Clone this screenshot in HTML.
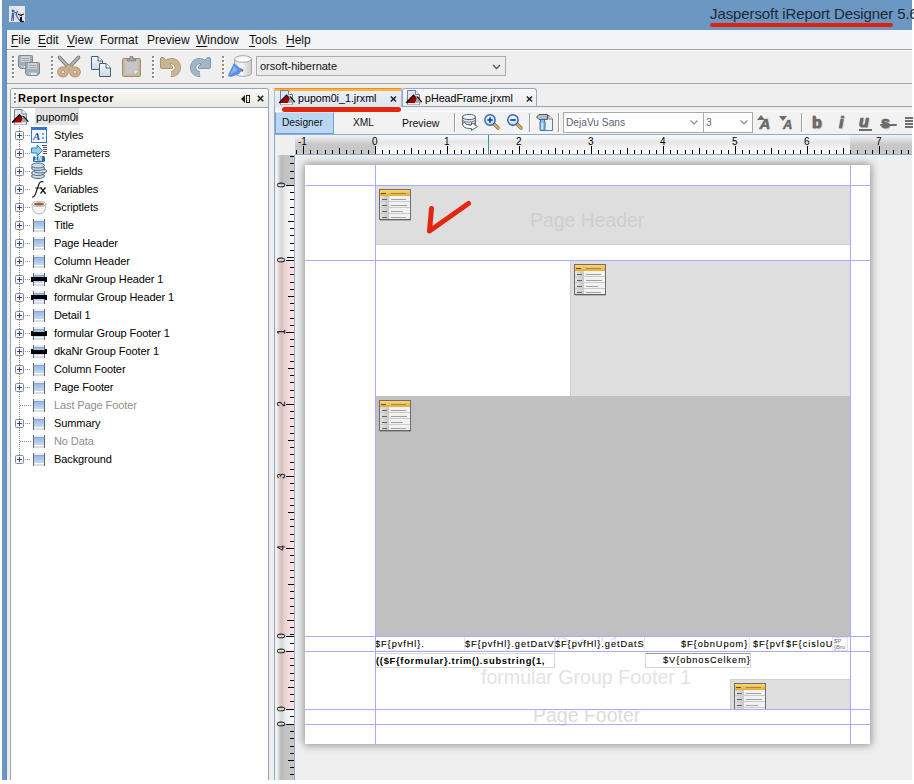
<!DOCTYPE html>
<html><head><meta charset="utf-8">
<style>
*{margin:0;padding:0;box-sizing:border-box}
html,body{width:914px;height:784px;overflow:hidden;background:#fff;font-family:"Liberation Sans",sans-serif;position:relative}
.a{position:absolute}
.t{position:absolute;white-space:nowrap;line-height:1}
svg{overflow:visible}
</style></head><body>
<div class="a" style="left:2px;top:0px;width:910px;height:780px;background:#6a98c3"></div>
<div class="a" style="left:6px;top:30px;width:1px;height:750px;background:#5d88b2"></div>
<svg class="a" style="left:9px;top:6px;" width="16" height="16" viewBox="0 0 16 16"><rect x="0" y="0" width="16" height="16" fill="#e8e8e8"/><path d="M0 0 L16 16 M4 0 L16 12 M0 6 L10 16" stroke="#d0d0d0" stroke-width="1"/><circle cx="4" cy="5" r="1.5" fill="#3a64b0"/><path d="M3 7 L5 7 L5 15 L4 15 L4 11 L3 15 L2 15 Z" fill="#3a64b0"/><path d="M5 7 L8 6 L7 9 L11 15" fill="none" stroke="#3a64b0" stroke-width="1.3"/><path d="M9 8 L13 10 M12 9 L15 8" stroke="#111" stroke-width="1.2"/><path d="M11 11 H13 V15 H15 V16 H11 Z" fill="#111"/></svg>
<div class="t" style="left:710px;top:6px;font-size:15px;color:#1f2833;letter-spacing:-0.1px">Jaspersoft iReport Designer 5.6</div>
<div class="a" style="left:710px;top:23px;width:183px;height:4px;border-radius:2px;background:#e3200b"></div>
<div class="a" style="left:7px;top:30px;width:905px;height:19px;background:#f3f4f6"></div>
<div class="a" style="left:7px;top:49px;width:905px;height:1px;background:#a2a2a2"></div>
<div class="a" style="left:7px;top:50px;width:905px;height:1px;background:#fdfdfd"></div>
<div class="t" style="left:11px;top:34px;font-size:12px;color:#111"><u style="text-decoration-thickness:1px;text-underline-offset:2px">F</u>ile</div>
<div class="t" style="left:38px;top:34px;font-size:12px;color:#111"><u style="text-decoration-thickness:1px;text-underline-offset:2px">E</u>dit</div>
<div class="t" style="left:67px;top:34px;font-size:12px;color:#111"><u style="text-decoration-thickness:1px;text-underline-offset:2px">V</u>iew</div>
<div class="t" style="left:100px;top:34px;font-size:12px;color:#111">Format</div>
<div class="t" style="left:147px;top:34px;font-size:12px;color:#111">Preview</div>
<div class="t" style="left:196px;top:34px;font-size:12px;color:#111"><u style="text-decoration-thickness:1px;text-underline-offset:2px">W</u>indow</div>
<div class="t" style="left:249px;top:34px;font-size:12px;color:#111"><u style="text-decoration-thickness:1px;text-underline-offset:2px">T</u>ools</div>
<div class="t" style="left:286px;top:34px;font-size:12px;color:#111"><u style="text-decoration-thickness:1px;text-underline-offset:2px">H</u>elp</div>
<div class="a" style="left:7px;top:51px;width:905px;height:32px;background:#efefef"></div>
<div class="a" style="left:7px;top:83px;width:905px;height:1px;background:#a9a9a9"></div>
<div class="a" style="left:7px;top:84px;width:905px;height:696px;background:#efefef"></div>
<div class="a" style="left:12px;top:56px;width:2px;height:2px;background:#8c8c8c;box-shadow:1px 1px 0 #fff"></div>
<div class="a" style="left:12px;top:60px;width:2px;height:2px;background:#8c8c8c;box-shadow:1px 1px 0 #fff"></div>
<div class="a" style="left:12px;top:64px;width:2px;height:2px;background:#8c8c8c;box-shadow:1px 1px 0 #fff"></div>
<div class="a" style="left:12px;top:68px;width:2px;height:2px;background:#8c8c8c;box-shadow:1px 1px 0 #fff"></div>
<div class="a" style="left:12px;top:72px;width:2px;height:2px;background:#8c8c8c;box-shadow:1px 1px 0 #fff"></div>
<div class="a" style="left:12px;top:76px;width:2px;height:2px;background:#8c8c8c;box-shadow:1px 1px 0 #fff"></div>
<div class="a" style="left:51px;top:56px;width:2px;height:2px;background:#8c8c8c;box-shadow:1px 1px 0 #fff"></div>
<div class="a" style="left:51px;top:60px;width:2px;height:2px;background:#8c8c8c;box-shadow:1px 1px 0 #fff"></div>
<div class="a" style="left:51px;top:64px;width:2px;height:2px;background:#8c8c8c;box-shadow:1px 1px 0 #fff"></div>
<div class="a" style="left:51px;top:68px;width:2px;height:2px;background:#8c8c8c;box-shadow:1px 1px 0 #fff"></div>
<div class="a" style="left:51px;top:72px;width:2px;height:2px;background:#8c8c8c;box-shadow:1px 1px 0 #fff"></div>
<div class="a" style="left:51px;top:76px;width:2px;height:2px;background:#8c8c8c;box-shadow:1px 1px 0 #fff"></div>
<div class="a" style="left:152px;top:56px;width:2px;height:2px;background:#8c8c8c;box-shadow:1px 1px 0 #fff"></div>
<div class="a" style="left:152px;top:60px;width:2px;height:2px;background:#8c8c8c;box-shadow:1px 1px 0 #fff"></div>
<div class="a" style="left:152px;top:64px;width:2px;height:2px;background:#8c8c8c;box-shadow:1px 1px 0 #fff"></div>
<div class="a" style="left:152px;top:68px;width:2px;height:2px;background:#8c8c8c;box-shadow:1px 1px 0 #fff"></div>
<div class="a" style="left:152px;top:72px;width:2px;height:2px;background:#8c8c8c;box-shadow:1px 1px 0 #fff"></div>
<div class="a" style="left:152px;top:76px;width:2px;height:2px;background:#8c8c8c;box-shadow:1px 1px 0 #fff"></div>
<div class="a" style="left:222px;top:56px;width:2px;height:2px;background:#8c8c8c;box-shadow:1px 1px 0 #fff"></div>
<div class="a" style="left:222px;top:60px;width:2px;height:2px;background:#8c8c8c;box-shadow:1px 1px 0 #fff"></div>
<div class="a" style="left:222px;top:64px;width:2px;height:2px;background:#8c8c8c;box-shadow:1px 1px 0 #fff"></div>
<div class="a" style="left:222px;top:68px;width:2px;height:2px;background:#8c8c8c;box-shadow:1px 1px 0 #fff"></div>
<div class="a" style="left:222px;top:72px;width:2px;height:2px;background:#8c8c8c;box-shadow:1px 1px 0 #fff"></div>
<div class="a" style="left:222px;top:76px;width:2px;height:2px;background:#8c8c8c;box-shadow:1px 1px 0 #fff"></div>
<svg class="a" style="left:18px;top:55px;" width="23" height="23" viewBox="0 0 23 23"><path d="M0.5 1.5 Q0.5 0.5 1.5 0.5 H13.5 Q14.5 0.5 14.5 1.5 V11.5 L12.5 13.5 H2.5 L0.5 11.5 Z" fill="#9daebc" stroke="#7b8996"/><rect x="3" y="1" width="9" height="6" fill="#cfd0d0"/><rect x="4" y="3" width="7" height="1" fill="#a8a8a8"/><rect x="4" y="5" width="7" height="1" fill="#a8a8a8"/><rect x="3" y="10" width="9" height="3" fill="#b8bcc0"/><rect x="6" y="11" width="5" height="2" fill="#e4e4e4"/><path d="M7.5 8.5 Q7.5 7.5 8.5 7.5 H20.5 Q21.5 7.5 21.5 8.5 V18.5 L19.5 20.5 H9.5 L7.5 18.5 Z" fill="#9daebc" stroke="#7b8996"/><rect x="10" y="8" width="9" height="6" fill="#cfd0d0"/><rect x="11" y="10" width="7" height="1" fill="#a8a8a8"/><rect x="11" y="12" width="7" height="1" fill="#a8a8a8"/><rect x="10" y="17" width="9" height="3" fill="#b8bcc0"/><rect x="13" y="18" width="5" height="2" fill="#e4e4e4"/></svg>
<svg class="a" style="left:58px;top:56px;" width="22" height="21" viewBox="0 0 22 21"><path d="M1.5 1.5 L10.5 11" stroke="#6c6c6c" stroke-width="3.6" stroke-linecap="round"/><path d="M20.5 1.5 L11.5 11" stroke="#6c6c6c" stroke-width="3.6" stroke-linecap="round"/><path d="M1.5 1.5 L10.5 11" stroke="#b4b4b4" stroke-width="2.2" stroke-linecap="round"/><path d="M20.5 1.5 L11.5 11" stroke="#b4b4b4" stroke-width="2.2" stroke-linecap="round"/><g fill="none" stroke="#a88a68" stroke-width="4.4"><ellipse cx="5" cy="16" rx="3.6" ry="3.2"/><ellipse cx="17" cy="16" rx="3.6" ry="3.2"/><path d="M7.5 13.5 L11 10.5 L14.5 13.5"/></g><g fill="none" stroke="#cfb08a" stroke-width="3"><ellipse cx="5" cy="16" rx="3.6" ry="3.2"/><ellipse cx="17" cy="16" rx="3.6" ry="3.2"/><path d="M7.5 13.5 L11 10.5 L14.5 13.5"/></g></svg>
<svg class="a" style="left:91px;top:56px;" width="20" height="21" viewBox="0 0 20 21"><defs><linearGradient id="cp" x1="0" y1="0" x2="0" y2="1"><stop offset="0" stop-color="#f4f8fc"/><stop offset="1" stop-color="#c8d8e8"/></linearGradient></defs><path d="M0.5 0.5 H7 L11.5 5 V13.5 H0.5 Z" fill="url(#cp)" stroke="#4e5c6a"/><path d="M7 0.5 V5 H11.5" fill="#fff" stroke="#4e5c6a"/><path d="M8.5 7.5 H15 L19.5 12 V20.5 H8.5 Z" fill="url(#cp)" stroke="#4e5c6a"/><path d="M15 7.5 V12 H19.5" fill="#fff" stroke="#4e5c6a"/></svg>
<svg class="a" style="left:122px;top:56px;" width="19" height="21" viewBox="0 0 19 21"><rect x="0.5" y="2.5" width="18" height="18" rx="1" fill="#c8b89a" stroke="#9c8c70"/><path d="M3 5 H16 V15 L13 18 H3 Z" fill="#c4c6c8"/><path d="M13 18 V15 H16" fill="#e8e8e8"/><path d="M5.5 5 H13.5 V3 H11 V0.5 H8 V3 H5.5 Z" fill="#a6a6a6" stroke="#808080" stroke-width="0.8"/></svg>
<svg class="a" style="left:160px;top:57px;" width="21" height="21" viewBox="0 0 21 21"><g><path d="M6.6 6.1 A6.5 6.5 0 1 1 11 17" fill="none" stroke="#ab9474" stroke-width="6.2"/><path d="M0.5 2 Q0.5 0.5 2 0.5 L3.5 0.5 L12.5 9.5 L12.5 11.5 L2 11.5 Q0.5 11.5 0.5 10 Z" fill="#cbb492" stroke="#ab9474" stroke-width="1"/><path d="M6.6 6.1 A6.5 6.5 0 1 1 11 17" fill="none" stroke="#cbb492" stroke-width="4.6"/><path d="M1.3 2 L1.3 10.7 L11.7 10.7 L11.7 9.8 L3.2 1.3 Z" fill="#cbb492"/></g></svg>
<svg class="a" style="left:190px;top:57px;" width="21" height="21" viewBox="0 0 21 21"><g transform="translate(21,0) scale(-1,1)"><path d="M6.6 6.1 A6.5 6.5 0 1 1 11 17" fill="none" stroke="#8198ac" stroke-width="6.2"/><path d="M0.5 2 Q0.5 0.5 2 0.5 L3.5 0.5 L12.5 9.5 L12.5 11.5 L2 11.5 Q0.5 11.5 0.5 10 Z" fill="#a3b6c6" stroke="#8198ac" stroke-width="1"/><path d="M6.6 6.1 A6.5 6.5 0 1 1 11 17" fill="none" stroke="#a3b6c6" stroke-width="4.6"/><path d="M1.3 2 L1.3 10.7 L11.7 10.7 L11.7 9.8 L3.2 1.3 Z" fill="#a3b6c6"/></g></svg>
<svg class="a" style="left:228px;top:55px;" width="24" height="23" viewBox="0 0 24 23"><defs><linearGradient id="cy" x1="0" y1="0" x2="1" y2="0"><stop offset="0" stop-color="#d8d8d8"/><stop offset="0.4" stop-color="#f8f8f8"/><stop offset="1" stop-color="#c8c8c8"/></linearGradient></defs><path d="M6.5 4 V18 A8.5 3.3 0 0 0 23.5 18 V4" fill="url(#cy)" stroke="#a8a8a8"/><ellipse cx="15" cy="4" rx="8.5" ry="3.3" fill="#fcfcfc" stroke="#a8a8a8"/><path d="M12 14 L15 16" stroke="#707070" stroke-width="2.5"/><path d="M0 21 L1 18 L6 8 L14 15 L11 19 L3 22 Z" fill="#5a8ee0"/><path d="M2 20 L6 11 L10 15 Z" fill="#8ab4ec"/></svg>
<div class="a" style="left:256px;top:56px;width:250px;height:20px;background:#ececec;border:1px solid #acacac"></div>
<div class="t" style="left:260px;top:61px;font-size:11px;color:#111">orsoft-hibernate</div>
<svg class="a" style="left:492px;top:64px;" width="9" height="6" viewBox="0 0 9 6"><path d="M1 1 L4.5 4.5 L8 1" fill="none" stroke="#555" stroke-width="1.3"/></svg>
<!--LEFT-->
<!--EDITOR-->
<div class="a" style="left:10px;top:88px;width:259px;height:692px;background:#fff;border:1px solid #8fa6bd;border-bottom:none;border-radius:3px 3px 0 0"></div>
<div class="a" style="left:11px;top:89px;width:257px;height:18px;background:linear-gradient(#fbfaf6,#e9e8e1);border-radius:2px 2px 0 0"></div>
<div class="a" style="left:11px;top:107px;width:257px;height:1px;background:#8fa6bd"></div>
<div class="a" style="left:14px;top:93px;width:2px;height:2px;background:radial-gradient(circle at 40% 40%,#777 0,#999 60%,transparent 80%);box-shadow:1px 1px 0 #fff"></div>
<div class="a" style="left:14px;top:97px;width:2px;height:2px;background:radial-gradient(circle at 40% 40%,#777 0,#999 60%,transparent 80%);box-shadow:1px 1px 0 #fff"></div>
<div class="a" style="left:14px;top:101px;width:2px;height:2px;background:radial-gradient(circle at 40% 40%,#777 0,#999 60%,transparent 80%);box-shadow:1px 1px 0 #fff"></div>
<div class="t" style="left:18px;top:93px;font-size:11px;font-weight:bold;color:#000;letter-spacing:0.5px">Report Inspector</div>
<svg class="a" style="left:241px;top:95px;" width="9" height="8" viewBox="0 0 9 8"><path d="M4 0 V8 L0 4 Z" fill="#222"/><rect x="5.5" y="0.5" width="3" height="7" fill="none" stroke="#222"/></svg>
<svg class="a" style="left:257px;top:95px;" width="7" height="7" viewBox="0 0 7 7"><path d="M0.8 0.8 L6.2 6.2 M6.2 0.8 L0.8 6.2" stroke="#222" stroke-width="1.6"/></svg>
<svg class="a" style="left:12px;top:109px;" width="17" height="16" viewBox="0 0 17 16"><path d="M2.5 0.5 H10 L14.5 5 V15.5 H2.5 Z" fill="#dfe7f0" stroke="#6f8192"/><path d="M10 0.5 V5 H14.5" fill="#f4f8fc" stroke="#6f8192"/><rect x="3" y="13" width="11" height="2.5" fill="#f6f6f6"/><path d="M0 13.5 L7.5 5.5 L11 9.3 L9 13.5 Z" fill="#9c0000"/><path d="M9 13.5 L11.5 7.5 L16.5 13 Z" fill="#a6a6a6"/><path d="M0 13.5 L7.5 5.5 L9.6 7.9 M10.5 7.7 L11.5 7.3 L16.3 12.7" fill="none" stroke="#000" stroke-width="1.1"/></svg>
<div class="a" style="left:35px;top:108px;width:44px;height:17px;background:#e3e3e3"></div>
<div class="t" style="left:36px;top:112px;font-size:11px;color:#000">pupom0i</div>
<div class="a" style="left:19px;top:126px;width:1px;height:333px;background:repeating-linear-gradient(#8a8a8a 0 1px,transparent 1px 2px)"></div>
<div class="a" style="left:25px;top:135px;width:6px;height:1px;background:repeating-linear-gradient(90deg,#8a8a8a 0 1px,transparent 1px 2px)"></div>
<svg class="a" style="left:15px;top:131px;" width="9" height="9" viewBox="0 0 9 9"><rect x="0.5" y="0.5" width="8" height="8" rx="1" fill="#f6f6f6" stroke="#8a8a8a"/><path d="M2 4.5 H7 M4.5 2 V7" stroke="#27468a" stroke-width="1"/></svg>
<svg class="a" style="left:31px;top:127px;" width="16" height="16" viewBox="0 0 16 16"><rect x="0.5" y="0.5" width="15" height="15" fill="#f2f6fb" stroke="#3a78c8"/><rect x="1" y="1" width="14" height="2" fill="#3a78c8"/><text x="2" y="13" font-family="Liberation Serif" font-style="italic" font-weight="bold" font-size="11" fill="#2a5aa8">A</text><rect x="11" y="6" width="2" height="2" fill="#7aa4d8"/><rect x="11" y="10" width="2" height="2" fill="#7aa4d8"/></svg>
<div class="t" style="left:54px;top:130px;font-size:11px;color:#000;letter-spacing:-0.1px">Styles</div>
<div class="a" style="left:25px;top:153px;width:6px;height:1px;background:repeating-linear-gradient(90deg,#8a8a8a 0 1px,transparent 1px 2px)"></div>
<svg class="a" style="left:15px;top:149px;" width="9" height="9" viewBox="0 0 9 9"><rect x="0.5" y="0.5" width="8" height="8" rx="1" fill="#f6f6f6" stroke="#8a8a8a"/><path d="M2 4.5 H7 M4.5 2 V7" stroke="#27468a" stroke-width="1"/></svg>
<svg class="a" style="left:31px;top:144px;" width="17" height="19" viewBox="0 0 17 19"><path d="M0.5 4 H6 V1 L11.5 6.5 L6 12 V9 H0.5 Z" fill="#8fd0f4" stroke="#2a80b8" stroke-width="1"/><rect x="11" y="1" width="5" height="1" fill="#555"/><rect x="12" y="3" width="4" height="1" fill="#555"/><rect x="12" y="5" width="4" height="1" fill="#555"/><rect x="12" y="7" width="4" height="1" fill="#555"/><rect x="12" y="9" width="4" height="1" fill="#555"/><rect x="2" y="12" width="12" height="6" rx="1.5" fill="#1e6ea8"/><text x="3" y="17.3" font-family="Liberation Mono" font-weight="bold" font-size="6.5" fill="#fff">IN</text></svg>
<div class="t" style="left:54px;top:148px;font-size:11px;color:#000;letter-spacing:-0.1px">Parameters</div>
<div class="a" style="left:25px;top:171px;width:6px;height:1px;background:repeating-linear-gradient(90deg,#8a8a8a 0 1px,transparent 1px 2px)"></div>
<svg class="a" style="left:15px;top:167px;" width="9" height="9" viewBox="0 0 9 9"><rect x="0.5" y="0.5" width="8" height="8" rx="1" fill="#f6f6f6" stroke="#8a8a8a"/><path d="M2 4.5 H7 M4.5 2 V7" stroke="#27468a" stroke-width="1"/></svg>
<svg class="a" style="left:31px;top:163px;" width="17" height="16" viewBox="0 0 17 16"><g fill="#cfdbe6" stroke="#4a6a88" stroke-width="1"><ellipse cx="7" cy="13" rx="6.5" ry="2.5"/><ellipse cx="7" cy="10" rx="6.5" ry="2.5"/><ellipse cx="9.5" cy="8" rx="6.5" ry="2"/><ellipse cx="7" cy="5" rx="6.5" ry="2.5"/><ellipse cx="7" cy="2.5" rx="6.5" ry="2.5"/></g></svg>
<div class="t" style="left:54px;top:166px;font-size:11px;color:#000;letter-spacing:-0.1px">Fields</div>
<div class="a" style="left:25px;top:189px;width:6px;height:1px;background:repeating-linear-gradient(90deg,#8a8a8a 0 1px,transparent 1px 2px)"></div>
<svg class="a" style="left:15px;top:185px;" width="9" height="9" viewBox="0 0 9 9"><rect x="0.5" y="0.5" width="8" height="8" rx="1" fill="#f6f6f6" stroke="#8a8a8a"/><path d="M2 4.5 H7 M4.5 2 V7" stroke="#27468a" stroke-width="1"/></svg>
<svg class="a" style="left:31px;top:181px;" width="17" height="17" viewBox="0 0 17 17"><path d="M1 16 Q3 16.5 4.5 13 L8 3 Q9.5 -0.5 12.5 1" fill="none" stroke="#1a1a1a" stroke-width="1.2"/><path d="M4 7 H9" stroke="#1a1a1a" stroke-width="0.9"/><path d="M9.5 6.5 L14.5 12.5 M14.5 6.5 L9.5 12.5" stroke="#1a1a1a" stroke-width="1.3"/><path d="M9 6.8 Q10 6 10.6 7 M13.5 12 Q14 13 15 12.2" stroke="#1a1a1a" stroke-width="0.8" fill="none"/></svg>
<div class="t" style="left:54px;top:184px;font-size:11px;color:#000;letter-spacing:-0.1px">Variables</div>
<div class="a" style="left:25px;top:207px;width:6px;height:1px;background:repeating-linear-gradient(90deg,#8a8a8a 0 1px,transparent 1px 2px)"></div>
<svg class="a" style="left:15px;top:203px;" width="9" height="9" viewBox="0 0 9 9"><rect x="0.5" y="0.5" width="8" height="8" rx="1" fill="#f6f6f6" stroke="#8a8a8a"/><path d="M2 4.5 H7 M4.5 2 V7" stroke="#27468a" stroke-width="1"/></svg>
<svg class="a" style="left:31px;top:199px;" width="16" height="16" viewBox="0 0 16 16"><path d="M1 5 Q1 15 8 15 Q15 15 15 5 Z" fill="#f4f4f4" stroke="#b8b8b8"/><ellipse cx="8" cy="5" rx="7" ry="2.6" fill="#f8f8f8" stroke="#b8b8b8"/><ellipse cx="8" cy="5" rx="5" ry="1.6" fill="#a05a38"/></svg>
<div class="t" style="left:54px;top:202px;font-size:11px;color:#000;letter-spacing:-0.1px">Scriptlets</div>
<div class="a" style="left:25px;top:225px;width:6px;height:1px;background:repeating-linear-gradient(90deg,#8a8a8a 0 1px,transparent 1px 2px)"></div>
<svg class="a" style="left:15px;top:221px;" width="9" height="9" viewBox="0 0 9 9"><rect x="0.5" y="0.5" width="8" height="8" rx="1" fill="#f6f6f6" stroke="#8a8a8a"/><path d="M2 4.5 H7 M4.5 2 V7" stroke="#27468a" stroke-width="1"/></svg>
<svg class="a" style="left:31px;top:219px;" width="16" height="13" viewBox="0 0 16 13"><defs><linearGradient id="bg" x1="0" y1="0" x2="0" y2="1"><stop offset="0" stop-color="#98bbe4"/><stop offset="1" stop-color="#c6dbf2"/></linearGradient></defs><rect x="2" y="0" width="12" height="13" fill="#ececec"/><rect x="2" y="2" width="12" height="1" fill="#86a6d6"/><rect x="2" y="3" width="12" height="7" fill="url(#bg)"/><rect x="2" y="10" width="12" height="1" fill="#fafafa"/><rect x="2" y="11" width="12" height="2" fill="#dedede"/><path d="M2.5 0 V13 M13.5 0 V13" stroke="#5a6a7c" stroke-width="1"/></svg>
<div class="t" style="left:54px;top:220px;font-size:11px;color:#000;letter-spacing:-0.1px">Title</div>
<div class="a" style="left:25px;top:243px;width:6px;height:1px;background:repeating-linear-gradient(90deg,#8a8a8a 0 1px,transparent 1px 2px)"></div>
<svg class="a" style="left:15px;top:239px;" width="9" height="9" viewBox="0 0 9 9"><rect x="0.5" y="0.5" width="8" height="8" rx="1" fill="#f6f6f6" stroke="#8a8a8a"/><path d="M2 4.5 H7 M4.5 2 V7" stroke="#27468a" stroke-width="1"/></svg>
<svg class="a" style="left:31px;top:237px;" width="16" height="13" viewBox="0 0 16 13"><defs><linearGradient id="bg" x1="0" y1="0" x2="0" y2="1"><stop offset="0" stop-color="#98bbe4"/><stop offset="1" stop-color="#c6dbf2"/></linearGradient></defs><rect x="2" y="0" width="12" height="13" fill="#ececec"/><rect x="2" y="2" width="12" height="1" fill="#86a6d6"/><rect x="2" y="3" width="12" height="7" fill="url(#bg)"/><rect x="2" y="10" width="12" height="1" fill="#fafafa"/><rect x="2" y="11" width="12" height="2" fill="#dedede"/><path d="M2.5 0 V13 M13.5 0 V13" stroke="#5a6a7c" stroke-width="1"/></svg>
<div class="t" style="left:54px;top:238px;font-size:11px;color:#000;letter-spacing:-0.1px">Page Header</div>
<div class="a" style="left:25px;top:261px;width:6px;height:1px;background:repeating-linear-gradient(90deg,#8a8a8a 0 1px,transparent 1px 2px)"></div>
<svg class="a" style="left:15px;top:257px;" width="9" height="9" viewBox="0 0 9 9"><rect x="0.5" y="0.5" width="8" height="8" rx="1" fill="#f6f6f6" stroke="#8a8a8a"/><path d="M2 4.5 H7 M4.5 2 V7" stroke="#27468a" stroke-width="1"/></svg>
<svg class="a" style="left:31px;top:255px;" width="16" height="13" viewBox="0 0 16 13"><defs><linearGradient id="bg" x1="0" y1="0" x2="0" y2="1"><stop offset="0" stop-color="#98bbe4"/><stop offset="1" stop-color="#c6dbf2"/></linearGradient></defs><rect x="2" y="0" width="12" height="13" fill="#ececec"/><rect x="2" y="2" width="12" height="1" fill="#86a6d6"/><rect x="2" y="3" width="12" height="7" fill="url(#bg)"/><rect x="2" y="10" width="12" height="1" fill="#fafafa"/><rect x="2" y="11" width="12" height="2" fill="#dedede"/><path d="M2.5 0 V13 M13.5 0 V13" stroke="#5a6a7c" stroke-width="1"/></svg>
<div class="t" style="left:54px;top:256px;font-size:11px;color:#000;letter-spacing:-0.1px">Column Header</div>
<div class="a" style="left:25px;top:279px;width:6px;height:1px;background:repeating-linear-gradient(90deg,#8a8a8a 0 1px,transparent 1px 2px)"></div>
<svg class="a" style="left:15px;top:275px;" width="9" height="9" viewBox="0 0 9 9"><rect x="0.5" y="0.5" width="8" height="8" rx="1" fill="#f6f6f6" stroke="#8a8a8a"/><path d="M2 4.5 H7 M4.5 2 V7" stroke="#27468a" stroke-width="1"/></svg>
<svg class="a" style="left:31px;top:273px;" width="16" height="13" viewBox="0 0 16 13"><defs><linearGradient id="bg" x1="0" y1="0" x2="0" y2="1"><stop offset="0" stop-color="#98bbe4"/><stop offset="1" stop-color="#c6dbf2"/></linearGradient></defs><rect x="2" y="0" width="12" height="13" fill="#ececec"/><rect x="2" y="2" width="12" height="1" fill="#86a6d6"/><rect x="2" y="3" width="12" height="7" fill="url(#bg)"/><rect x="2" y="10" width="12" height="1" fill="#fafafa"/><rect x="2" y="11" width="12" height="2" fill="#dedede"/><path d="M2.5 0 V13 M13.5 0 V13" stroke="#5a6a7c" stroke-width="1"/><path d="M0 4 H16 V9 H14 V8 H2 V9 H0 Z" fill="#000"/></svg>
<div class="t" style="left:54px;top:274px;font-size:11px;color:#000;letter-spacing:-0.1px">dkaNr Group Header 1</div>
<div class="a" style="left:25px;top:297px;width:6px;height:1px;background:repeating-linear-gradient(90deg,#8a8a8a 0 1px,transparent 1px 2px)"></div>
<svg class="a" style="left:15px;top:293px;" width="9" height="9" viewBox="0 0 9 9"><rect x="0.5" y="0.5" width="8" height="8" rx="1" fill="#f6f6f6" stroke="#8a8a8a"/><path d="M2 4.5 H7 M4.5 2 V7" stroke="#27468a" stroke-width="1"/></svg>
<svg class="a" style="left:31px;top:291px;" width="16" height="13" viewBox="0 0 16 13"><defs><linearGradient id="bg" x1="0" y1="0" x2="0" y2="1"><stop offset="0" stop-color="#98bbe4"/><stop offset="1" stop-color="#c6dbf2"/></linearGradient></defs><rect x="2" y="0" width="12" height="13" fill="#ececec"/><rect x="2" y="2" width="12" height="1" fill="#86a6d6"/><rect x="2" y="3" width="12" height="7" fill="url(#bg)"/><rect x="2" y="10" width="12" height="1" fill="#fafafa"/><rect x="2" y="11" width="12" height="2" fill="#dedede"/><path d="M2.5 0 V13 M13.5 0 V13" stroke="#5a6a7c" stroke-width="1"/><path d="M0 4 H16 V9 H14 V8 H2 V9 H0 Z" fill="#000"/></svg>
<div class="t" style="left:54px;top:292px;font-size:11px;color:#000;letter-spacing:-0.1px">formular Group Header 1</div>
<div class="a" style="left:25px;top:315px;width:6px;height:1px;background:repeating-linear-gradient(90deg,#8a8a8a 0 1px,transparent 1px 2px)"></div>
<svg class="a" style="left:15px;top:311px;" width="9" height="9" viewBox="0 0 9 9"><rect x="0.5" y="0.5" width="8" height="8" rx="1" fill="#f6f6f6" stroke="#8a8a8a"/><path d="M2 4.5 H7 M4.5 2 V7" stroke="#27468a" stroke-width="1"/></svg>
<svg class="a" style="left:31px;top:309px;" width="16" height="13" viewBox="0 0 16 13"><defs><linearGradient id="bg" x1="0" y1="0" x2="0" y2="1"><stop offset="0" stop-color="#98bbe4"/><stop offset="1" stop-color="#c6dbf2"/></linearGradient></defs><rect x="2" y="0" width="12" height="13" fill="#ececec"/><rect x="2" y="2" width="12" height="1" fill="#86a6d6"/><rect x="2" y="3" width="12" height="7" fill="url(#bg)"/><rect x="2" y="10" width="12" height="1" fill="#fafafa"/><rect x="2" y="11" width="12" height="2" fill="#dedede"/><path d="M2.5 0 V13 M13.5 0 V13" stroke="#5a6a7c" stroke-width="1"/></svg>
<div class="t" style="left:54px;top:310px;font-size:11px;color:#000;letter-spacing:-0.1px">Detail 1</div>
<div class="a" style="left:25px;top:333px;width:6px;height:1px;background:repeating-linear-gradient(90deg,#8a8a8a 0 1px,transparent 1px 2px)"></div>
<svg class="a" style="left:15px;top:329px;" width="9" height="9" viewBox="0 0 9 9"><rect x="0.5" y="0.5" width="8" height="8" rx="1" fill="#f6f6f6" stroke="#8a8a8a"/><path d="M2 4.5 H7 M4.5 2 V7" stroke="#27468a" stroke-width="1"/></svg>
<svg class="a" style="left:31px;top:327px;" width="16" height="13" viewBox="0 0 16 13"><defs><linearGradient id="bg" x1="0" y1="0" x2="0" y2="1"><stop offset="0" stop-color="#98bbe4"/><stop offset="1" stop-color="#c6dbf2"/></linearGradient></defs><rect x="2" y="0" width="12" height="13" fill="#ececec"/><rect x="2" y="2" width="12" height="1" fill="#86a6d6"/><rect x="2" y="3" width="12" height="7" fill="url(#bg)"/><rect x="2" y="10" width="12" height="1" fill="#fafafa"/><rect x="2" y="11" width="12" height="2" fill="#dedede"/><path d="M2.5 0 V13 M13.5 0 V13" stroke="#5a6a7c" stroke-width="1"/><path d="M0 5 H16 V9 H14 V9 H2 V9 H0 Z" fill="#000"/><rect x="0" y="4" width="2" height="1" fill="#000"/><rect x="14" y="4" width="2" height="1" fill="#000"/></svg>
<div class="t" style="left:54px;top:328px;font-size:11px;color:#000;letter-spacing:-0.1px">formular Group Footer 1</div>
<div class="a" style="left:25px;top:351px;width:6px;height:1px;background:repeating-linear-gradient(90deg,#8a8a8a 0 1px,transparent 1px 2px)"></div>
<svg class="a" style="left:15px;top:347px;" width="9" height="9" viewBox="0 0 9 9"><rect x="0.5" y="0.5" width="8" height="8" rx="1" fill="#f6f6f6" stroke="#8a8a8a"/><path d="M2 4.5 H7 M4.5 2 V7" stroke="#27468a" stroke-width="1"/></svg>
<svg class="a" style="left:31px;top:345px;" width="16" height="13" viewBox="0 0 16 13"><defs><linearGradient id="bg" x1="0" y1="0" x2="0" y2="1"><stop offset="0" stop-color="#98bbe4"/><stop offset="1" stop-color="#c6dbf2"/></linearGradient></defs><rect x="2" y="0" width="12" height="13" fill="#ececec"/><rect x="2" y="2" width="12" height="1" fill="#86a6d6"/><rect x="2" y="3" width="12" height="7" fill="url(#bg)"/><rect x="2" y="10" width="12" height="1" fill="#fafafa"/><rect x="2" y="11" width="12" height="2" fill="#dedede"/><path d="M2.5 0 V13 M13.5 0 V13" stroke="#5a6a7c" stroke-width="1"/><path d="M0 5 H16 V9 H14 V9 H2 V9 H0 Z" fill="#000"/><rect x="0" y="4" width="2" height="1" fill="#000"/><rect x="14" y="4" width="2" height="1" fill="#000"/></svg>
<div class="t" style="left:54px;top:346px;font-size:11px;color:#000;letter-spacing:-0.1px">dkaNr Group Footer 1</div>
<div class="a" style="left:25px;top:369px;width:6px;height:1px;background:repeating-linear-gradient(90deg,#8a8a8a 0 1px,transparent 1px 2px)"></div>
<svg class="a" style="left:15px;top:365px;" width="9" height="9" viewBox="0 0 9 9"><rect x="0.5" y="0.5" width="8" height="8" rx="1" fill="#f6f6f6" stroke="#8a8a8a"/><path d="M2 4.5 H7 M4.5 2 V7" stroke="#27468a" stroke-width="1"/></svg>
<svg class="a" style="left:31px;top:363px;" width="16" height="13" viewBox="0 0 16 13"><defs><linearGradient id="bg" x1="0" y1="0" x2="0" y2="1"><stop offset="0" stop-color="#98bbe4"/><stop offset="1" stop-color="#c6dbf2"/></linearGradient></defs><rect x="2" y="0" width="12" height="13" fill="#ececec"/><rect x="2" y="2" width="12" height="1" fill="#86a6d6"/><rect x="2" y="3" width="12" height="7" fill="url(#bg)"/><rect x="2" y="10" width="12" height="1" fill="#fafafa"/><rect x="2" y="11" width="12" height="2" fill="#dedede"/><path d="M2.5 0 V13 M13.5 0 V13" stroke="#5a6a7c" stroke-width="1"/></svg>
<div class="t" style="left:54px;top:364px;font-size:11px;color:#000;letter-spacing:-0.1px">Column Footer</div>
<div class="a" style="left:25px;top:387px;width:6px;height:1px;background:repeating-linear-gradient(90deg,#8a8a8a 0 1px,transparent 1px 2px)"></div>
<svg class="a" style="left:15px;top:383px;" width="9" height="9" viewBox="0 0 9 9"><rect x="0.5" y="0.5" width="8" height="8" rx="1" fill="#f6f6f6" stroke="#8a8a8a"/><path d="M2 4.5 H7 M4.5 2 V7" stroke="#27468a" stroke-width="1"/></svg>
<svg class="a" style="left:31px;top:381px;" width="16" height="13" viewBox="0 0 16 13"><defs><linearGradient id="bg" x1="0" y1="0" x2="0" y2="1"><stop offset="0" stop-color="#98bbe4"/><stop offset="1" stop-color="#c6dbf2"/></linearGradient></defs><rect x="2" y="0" width="12" height="13" fill="#ececec"/><rect x="2" y="2" width="12" height="1" fill="#86a6d6"/><rect x="2" y="3" width="12" height="7" fill="url(#bg)"/><rect x="2" y="10" width="12" height="1" fill="#fafafa"/><rect x="2" y="11" width="12" height="2" fill="#dedede"/><path d="M2.5 0 V13 M13.5 0 V13" stroke="#5a6a7c" stroke-width="1"/></svg>
<div class="t" style="left:54px;top:382px;font-size:11px;color:#000;letter-spacing:-0.1px">Page Footer</div>
<div class="a" style="left:20px;top:405px;width:11px;height:1px;background:repeating-linear-gradient(90deg,#8a8a8a 0 1px,transparent 1px 2px)"></div>
<svg class="a" style="left:31px;top:399px;" width="16" height="13" viewBox="0 0 16 13"><defs><linearGradient id="bg" x1="0" y1="0" x2="0" y2="1"><stop offset="0" stop-color="#98bbe4"/><stop offset="1" stop-color="#c6dbf2"/></linearGradient></defs><rect x="2" y="0" width="12" height="13" fill="#ececec"/><rect x="2" y="2" width="12" height="1" fill="#86a6d6"/><rect x="2" y="3" width="12" height="7" fill="url(#bg)"/><rect x="2" y="10" width="12" height="1" fill="#fafafa"/><rect x="2" y="11" width="12" height="2" fill="#dedede"/><path d="M2.5 0 V13 M13.5 0 V13" stroke="#5a6a7c" stroke-width="1"/></svg>
<div class="t" style="left:54px;top:400px;font-size:11px;color:#8e8e8e;letter-spacing:-0.1px">Last Page Footer</div>
<div class="a" style="left:25px;top:423px;width:6px;height:1px;background:repeating-linear-gradient(90deg,#8a8a8a 0 1px,transparent 1px 2px)"></div>
<svg class="a" style="left:15px;top:419px;" width="9" height="9" viewBox="0 0 9 9"><rect x="0.5" y="0.5" width="8" height="8" rx="1" fill="#f6f6f6" stroke="#8a8a8a"/><path d="M2 4.5 H7 M4.5 2 V7" stroke="#27468a" stroke-width="1"/></svg>
<svg class="a" style="left:31px;top:417px;" width="16" height="13" viewBox="0 0 16 13"><defs><linearGradient id="bg" x1="0" y1="0" x2="0" y2="1"><stop offset="0" stop-color="#98bbe4"/><stop offset="1" stop-color="#c6dbf2"/></linearGradient></defs><rect x="2" y="0" width="12" height="13" fill="#ececec"/><rect x="2" y="2" width="12" height="1" fill="#86a6d6"/><rect x="2" y="3" width="12" height="7" fill="url(#bg)"/><rect x="2" y="10" width="12" height="1" fill="#fafafa"/><rect x="2" y="11" width="12" height="2" fill="#dedede"/><path d="M2.5 0 V13 M13.5 0 V13" stroke="#5a6a7c" stroke-width="1"/></svg>
<div class="t" style="left:54px;top:418px;font-size:11px;color:#000;letter-spacing:-0.1px">Summary</div>
<div class="a" style="left:20px;top:441px;width:11px;height:1px;background:repeating-linear-gradient(90deg,#8a8a8a 0 1px,transparent 1px 2px)"></div>
<svg class="a" style="left:31px;top:435px;" width="16" height="13" viewBox="0 0 16 13"><defs><linearGradient id="bg" x1="0" y1="0" x2="0" y2="1"><stop offset="0" stop-color="#98bbe4"/><stop offset="1" stop-color="#c6dbf2"/></linearGradient></defs><rect x="2" y="0" width="12" height="13" fill="#ececec"/><rect x="2" y="2" width="12" height="1" fill="#86a6d6"/><rect x="2" y="3" width="12" height="7" fill="url(#bg)"/><rect x="2" y="10" width="12" height="1" fill="#fafafa"/><rect x="2" y="11" width="12" height="2" fill="#dedede"/><path d="M2.5 0 V13 M13.5 0 V13" stroke="#5a6a7c" stroke-width="1"/></svg>
<div class="t" style="left:54px;top:436px;font-size:11px;color:#8e8e8e;letter-spacing:-0.1px">No Data</div>
<div class="a" style="left:25px;top:459px;width:6px;height:1px;background:repeating-linear-gradient(90deg,#8a8a8a 0 1px,transparent 1px 2px)"></div>
<svg class="a" style="left:15px;top:455px;" width="9" height="9" viewBox="0 0 9 9"><rect x="0.5" y="0.5" width="8" height="8" rx="1" fill="#f6f6f6" stroke="#8a8a8a"/><path d="M2 4.5 H7 M4.5 2 V7" stroke="#27468a" stroke-width="1"/></svg>
<svg class="a" style="left:31px;top:453px;" width="16" height="13" viewBox="0 0 16 13"><defs><linearGradient id="bg" x1="0" y1="0" x2="0" y2="1"><stop offset="0" stop-color="#98bbe4"/><stop offset="1" stop-color="#c6dbf2"/></linearGradient></defs><rect x="2" y="0" width="12" height="13" fill="#ececec"/><rect x="2" y="2" width="12" height="1" fill="#86a6d6"/><rect x="2" y="3" width="12" height="7" fill="url(#bg)"/><rect x="2" y="10" width="12" height="1" fill="#fafafa"/><rect x="2" y="11" width="12" height="2" fill="#dedede"/><path d="M2.5 0 V13 M13.5 0 V13" stroke="#5a6a7c" stroke-width="1"/></svg>
<div class="t" style="left:54px;top:454px;font-size:11px;color:#000;letter-spacing:-0.1px">Background</div>
<div class="a" style="left:274px;top:88px;width:128px;height:19px;background:linear-gradient(#edf1fa,#dde4f1);border-left:1px solid #a9bcd2;border-right:1px solid #a9bcd2;border-radius:3px 3px 0 0"></div>
<div class="a" style="left:274px;top:88px;width:128px;height:1px;background:#e8902a;border-radius:3px 3px 0 0"></div>
<div class="a" style="left:275px;top:89px;width:126px;height:2px;background:#f9b73c"></div>
<svg class="a" style="left:279px;top:90px;" width="16" height="16" viewBox="0 0 16 16"><path d="M1.5 0.5 H9.5 L13.5 4.5 V14.5 H1.5 Z" fill="#dde6f0" stroke="#6f8192"/><path d="M9.5 0.5 V4.5 H13.5" fill="#f4f8fc" stroke="#6f8192"/><rect x="2" y="12" width="11" height="2.5" fill="#f6f6f6"/><path d="M0 13 L7.5 5 L11 8.8 L9 13 Z" fill="#9c0000"/><path d="M9 13 L11.5 7 L16 12.5 Z" fill="#a6a6a6"/><path d="M0 13 L7.5 5 L9.6 7.4 M10.5 7.2 L11.5 6.8 L15.8 12.2" fill="none" stroke="#000" stroke-width="1.1"/></svg>
<div class="t" style="left:298px;top:93px;font-size:10.7px;color:#000">pupom0i_1.jrxml</div>
<svg class="a" style="left:390px;top:96px;" width="7" height="6" viewBox="0 0 7 6"><path d="M0.8 0.5 L6 5.5 M6 0.5 L0.8 5.5" stroke="#222" stroke-width="1.5"/></svg>
<div class="a" style="left:402px;top:88px;width:135px;height:19px;background:linear-gradient(#f9f9f9,#ececec);border:1px solid #93aac0;border-bottom:none;border-radius:3px 3px 0 0"></div>
<svg class="a" style="left:406px;top:90px;" width="16" height="16" viewBox="0 0 16 16"><path d="M1.5 0.5 H9.5 L13.5 4.5 V14.5 H1.5 Z" fill="#dde6f0" stroke="#6f8192"/><path d="M9.5 0.5 V4.5 H13.5" fill="#f4f8fc" stroke="#6f8192"/><rect x="2" y="12" width="11" height="2.5" fill="#f6f6f6"/><path d="M0 13 L7.5 5 L11 8.8 L9 13 Z" fill="#9c0000"/><path d="M9 13 L11.5 7 L16 12.5 Z" fill="#a6a6a6"/><path d="M0 13 L7.5 5 L9.6 7.4 M10.5 7.2 L11.5 6.8 L15.8 12.2" fill="none" stroke="#000" stroke-width="1.1"/></svg>
<div class="t" style="left:425px;top:93px;font-size:10.7px;color:#000">pHeadFrame.jrxml</div>
<svg class="a" style="left:526px;top:96px;" width="7" height="6" viewBox="0 0 7 6"><path d="M0.8 0.5 L6 5.5 M6 0.5 L0.8 5.5" stroke="#222" stroke-width="1.5"/></svg>
<div class="a" style="left:275px;top:106px;width:637px;height:674px;background:#efefef"></div>
<div class="a" style="left:401px;top:106px;width:511px;height:1px;background:#8ea9c5"></div>
<div class="a" style="left:275px;top:106px;width:126px;height:1px;background:#e2e8f2"></div>
<div class="a" style="left:275px;top:107px;width:637px;height:1px;background:#f3efe0"></div>
<div class="a" style="left:275px;top:108px;width:637px;height:26px;background:#f2f2f2"></div>
<div class="a" style="left:275px;top:111px;width:637px;height:1px;background:#fdfdfd"></div>
<div class="a" style="left:275px;top:134px;width:637px;height:1px;background:#8eaacc"></div>
<div class="a" style="left:274px;top:106px;width:1px;height:674px;background:#8ea9c5"></div>
<div class="a" style="left:275px;top:112px;width:59px;height:22px;background:#b9d7f3;border:1px solid #6ea2da;border-top:1px solid #cfe4f8"></div>
<div class="t" style="left:282px;top:118px;font-size:10.2px;color:#101010">Designer</div>
<div class="t" style="left:353px;top:118px;font-size:10.2px;color:#101010">XML</div>
<div class="t" style="left:402px;top:118px;font-size:10.5px;color:#101010">Preview</div>
<div class="a" style="left:454px;top:113px;width:1px;height:19px;background:#9c9c9c;box-shadow:1px 0 0 #fff"></div>
<div class="a" style="left:529px;top:113px;width:1px;height:19px;background:#9c9c9c;box-shadow:1px 0 0 #fff"></div>
<div class="a" style="left:558px;top:113px;width:1px;height:19px;background:#9c9c9c;box-shadow:1px 0 0 #fff"></div>
<div class="a" style="left:801px;top:113px;width:1px;height:19px;background:#9c9c9c;box-shadow:1px 0 0 #fff"></div>
<svg class="a" style="left:461px;top:113px;" width="17" height="18" viewBox="0 0 17 18"><path d="M1.5 4 V11 A6.5 2.6 0 0 0 14.5 11 V4" fill="#dfe6ec" stroke="#56646e" stroke-width="1"/><path d="M1.5 6.5 A6.5 2.6 0 0 0 14.5 6.5 M1.5 9 A6.5 2.6 0 0 0 14.5 9" fill="none" stroke="#6e7c86" stroke-width="0.9"/><ellipse cx="8" cy="4" rx="6.5" ry="2.6" fill="#f2f5f8" stroke="#56646e" stroke-width="1"/><path d="M1.5 10 Q1.5 15.5 8.5 15.5 H10.5 V17.5 L16.5 13.5 L10.5 9.5 V12 H8.5 Q4.5 12 4 9.5 Z" fill="#f8fafc" stroke="#56646e" stroke-width="1"/></svg>
<svg class="a" style="left:484px;top:114px;" width="16" height="16" viewBox="0 0 16 16"><defs><radialGradient id="lens" cx="0.4" cy="0.35" r="0.7"><stop offset="0" stop-color="#ffffff"/><stop offset="1" stop-color="#b8d4f4"/></radialGradient></defs><path d="M9.5 9.5 L14 14" stroke="#8a6a30" stroke-width="3.4" stroke-linecap="round"/><path d="M9.5 9.5 L14 14" stroke="#d8b060" stroke-width="2" stroke-linecap="round"/><circle cx="6" cy="6" r="5.2" fill="url(#lens)" stroke="#2f62b8" stroke-width="1.4"/><path d="M3.3 6 H8.7" stroke="#1e4a98" stroke-width="1.8"/><path d="M6 3.3 V8.7" stroke="#1e4a98" stroke-width="1.8"/></svg>
<svg class="a" style="left:507px;top:114px;" width="16" height="16" viewBox="0 0 16 16"><defs><radialGradient id="lens" cx="0.4" cy="0.35" r="0.7"><stop offset="0" stop-color="#ffffff"/><stop offset="1" stop-color="#b8d4f4"/></radialGradient></defs><path d="M9.5 9.5 L14 14" stroke="#8a6a30" stroke-width="3.4" stroke-linecap="round"/><path d="M9.5 9.5 L14 14" stroke="#d8b060" stroke-width="2" stroke-linecap="round"/><circle cx="6" cy="6" r="5.2" fill="url(#lens)" stroke="#2f62b8" stroke-width="1.4"/><path d="M3.3 6 H8.7" stroke="#1e4a98" stroke-width="1.8"/></svg>
<svg class="a" style="left:536px;top:113px;" width="17" height="18" viewBox="0 0 17 18"><path d="M6.5 2.5 H13 L16.5 6 V17.5 H6.5 Z" fill="#eef2f6" stroke="#6a7a88"/><path d="M13 2.5 V6 H16.5" fill="#fff" stroke="#6a7a88"/><path d="M0.5 4 L3 1.5 H11.5 V6.5 H3 Z" fill="#b4bcc4" stroke="#505a64"/><path d="M4.5 6.5 H8.5 V8 L9 9 V16.5 Q9 17.5 8 17.5 H5 Q4 17.5 4 16.5 V9 L4.5 8 Z" fill="#8cc0ec" stroke="#3a6a98"/><rect x="5.5" y="10" width="1.2" height="6" fill="#e8f4ff"/></svg>
<div class="a" style="left:282px;top:107px;width:119px;height:5px;background:#e3260b;border-radius:2.5px"></div>
<div class="a" style="left:563px;top:112px;width:141px;height:21px;background:#fff;border:1px solid #aaa"></div>
<div class="t" style="left:566px;top:118px;font-size:10.2px;color:#5a6078">DejaVu Sans</div>
<svg class="a" style="left:690px;top:120px;" width="8" height="5" viewBox="0 0 8 5"><path d="M0.5 0.5 L4 4 L7.5 0.5" fill="none" stroke="#8a8a8a" stroke-width="1.2"/></svg>
<div class="a" style="left:703px;top:112px;width:50px;height:21px;background:#fff;border:1px solid #aaa"></div>
<div class="t" style="left:706px;top:118px;font-size:10.2px;color:#5a6078">3</div>
<svg class="a" style="left:740px;top:120px;" width="8" height="5" viewBox="0 0 8 5"><path d="M0.5 0.5 L4 4 L7.5 0.5" fill="none" stroke="#8a8a8a" stroke-width="1.2"/></svg>
<svg class="a" style="left:757px;top:114px;" width="16" height="16" viewBox="0 0 16 16"><text x="2.5" y="15" font-family="Liberation Sans" font-weight="bold" font-style="italic" font-size="15" fill="#6a6a6a" stroke="#6a6a6a" stroke-width="0.6">A</text><path d="M0 6 L4 1 L8 6 Z" fill="#6a6a6a"/></svg>
<svg class="a" style="left:779px;top:115px;" width="16" height="15" viewBox="0 0 16 15"><text x="4" y="14" font-family="Liberation Sans" font-weight="bold" font-style="italic" font-size="13" fill="#6a6a6a" stroke="#6a6a6a" stroke-width="0.5">A</text><path d="M0 1 H8 L4 6 Z" fill="#6a6a6a"/></svg>
<div class="t" style="left:812px;top:115px;font-size:16px;font-weight:bold;color:#6c6c6c;text-shadow:0 0 1px rgba(80,80,80,0.9),1px 1px 1px rgba(0,0,0,0.25);-webkit-text-stroke:0.6px #6c6c6c">b</div>
<div class="t" style="left:839px;top:115px;font-size:16px;font-weight:bold;font-style:italic;color:#6c6c6c;text-shadow:0 0 1px rgba(80,80,80,0.9),1px 1px 1px rgba(0,0,0,0.25);-webkit-text-stroke:0.6px #6c6c6c">i</div>
<div class="t" style="left:859px;top:114px;font-size:16px;font-weight:bold;font-style:italic;color:#6c6c6c;text-shadow:0 0 1px rgba(80,80,80,0.9),1px 1px 1px rgba(0,0,0,0.25);-webkit-text-stroke:0.6px #6c6c6c">u</div>
<div class="a" style="left:859px;top:129px;width:13px;height:1.5px;background:#6c6c6c"></div>
<div class="t" style="left:881px;top:115px;font-size:16px;font-weight:bold;color:#6c6c6c;text-shadow:0 0 1px rgba(80,80,80,0.9),1px 1px 1px rgba(0,0,0,0.25);-webkit-text-stroke:0.6px #6c6c6c">s</div>
<div class="a" style="left:880px;top:124px;width:17px;height:2px;background:#6c6c6c;border-radius:1px"></div>
<div class="a" style="left:905px;top:117px;width:8px;height:2px;background:#707070"></div>
<div class="a" style="left:905px;top:120px;width:8px;height:2px;background:#707070"></div>
<div class="a" style="left:905px;top:123px;width:8px;height:2px;background:#707070"></div>
<div class="a" style="left:905px;top:126px;width:8px;height:2px;background:#707070"></div>
<div class="a" style="left:295px;top:135px;width:617px;height:19px;background:linear-gradient(#f8f8f8,#f4f4f4 15%,#e6e6e6 38%,#f2f2f2 65%,#fcfcfc)"></div>
<div class="a" style="left:295px;top:135px;width:80px;height:19px;background:linear-gradient(#f2f2f2,#c6c6c6 55%,#c8c8c8)"></div>
<div class="a" style="left:850px;top:135px;width:62px;height:19px;background:linear-gradient(#f2f2f2,#c6c6c6 55%,#c8c8c8)"></div>
<div class="a" style="left:295px;top:154px;width:617px;height:1px;background:#8eaacc"></div>
<div class="a" style="left:296px;top:150px;width:1px;height:4px;background:#000"></div>
<div class="a" style="left:303px;top:146px;width:1px;height:8px;background:#000"></div>
<div class="t" style="left:298px;top:137px;font-size:10px;color:#000;font-family:Liberation Sans">-1</div>
<div class="a" style="left:310px;top:150px;width:1px;height:4px;background:#000"></div>
<div class="a" style="left:317px;top:150px;width:1px;height:4px;background:#000"></div>
<div class="a" style="left:325px;top:150px;width:1px;height:4px;background:#000"></div>
<div class="a" style="left:332px;top:150px;width:1px;height:4px;background:#000"></div>
<div class="a" style="left:339px;top:148px;width:1px;height:6px;background:#000"></div>
<div class="a" style="left:346px;top:150px;width:1px;height:4px;background:#000"></div>
<div class="a" style="left:353px;top:150px;width:1px;height:4px;background:#000"></div>
<div class="a" style="left:361px;top:150px;width:1px;height:4px;background:#000"></div>
<div class="a" style="left:368px;top:150px;width:1px;height:4px;background:#000"></div>
<div class="a" style="left:375px;top:146px;width:1px;height:8px;background:#000"></div>
<div class="t" style="left:372px;top:137px;font-size:10px;color:#000;font-family:Liberation Sans">0</div>
<div class="a" style="left:382px;top:150px;width:1px;height:4px;background:#000"></div>
<div class="a" style="left:389px;top:150px;width:1px;height:4px;background:#000"></div>
<div class="a" style="left:397px;top:150px;width:1px;height:4px;background:#000"></div>
<div class="a" style="left:404px;top:150px;width:1px;height:4px;background:#000"></div>
<div class="a" style="left:411px;top:148px;width:1px;height:6px;background:#000"></div>
<div class="a" style="left:418px;top:150px;width:1px;height:4px;background:#000"></div>
<div class="a" style="left:425px;top:150px;width:1px;height:4px;background:#000"></div>
<div class="a" style="left:433px;top:150px;width:1px;height:4px;background:#000"></div>
<div class="a" style="left:440px;top:150px;width:1px;height:4px;background:#000"></div>
<div class="a" style="left:447px;top:146px;width:1px;height:8px;background:#000"></div>
<div class="t" style="left:444px;top:137px;font-size:10px;color:#000;font-family:Liberation Sans">1</div>
<div class="a" style="left:454px;top:150px;width:1px;height:4px;background:#000"></div>
<div class="a" style="left:461px;top:150px;width:1px;height:4px;background:#000"></div>
<div class="a" style="left:469px;top:150px;width:1px;height:4px;background:#000"></div>
<div class="a" style="left:476px;top:150px;width:1px;height:4px;background:#000"></div>
<div class="a" style="left:483px;top:148px;width:1px;height:6px;background:#000"></div>
<div class="a" style="left:490px;top:150px;width:1px;height:4px;background:#000"></div>
<div class="a" style="left:497px;top:150px;width:1px;height:4px;background:#000"></div>
<div class="a" style="left:505px;top:150px;width:1px;height:4px;background:#000"></div>
<div class="a" style="left:512px;top:150px;width:1px;height:4px;background:#000"></div>
<div class="a" style="left:519px;top:146px;width:1px;height:8px;background:#000"></div>
<div class="t" style="left:516px;top:137px;font-size:10px;color:#000;font-family:Liberation Sans">2</div>
<div class="a" style="left:526px;top:150px;width:1px;height:4px;background:#000"></div>
<div class="a" style="left:533px;top:150px;width:1px;height:4px;background:#000"></div>
<div class="a" style="left:541px;top:150px;width:1px;height:4px;background:#000"></div>
<div class="a" style="left:548px;top:150px;width:1px;height:4px;background:#000"></div>
<div class="a" style="left:555px;top:148px;width:1px;height:6px;background:#000"></div>
<div class="a" style="left:562px;top:150px;width:1px;height:4px;background:#000"></div>
<div class="a" style="left:569px;top:150px;width:1px;height:4px;background:#000"></div>
<div class="a" style="left:577px;top:150px;width:1px;height:4px;background:#000"></div>
<div class="a" style="left:584px;top:150px;width:1px;height:4px;background:#000"></div>
<div class="a" style="left:591px;top:146px;width:1px;height:8px;background:#000"></div>
<div class="t" style="left:588px;top:137px;font-size:10px;color:#000;font-family:Liberation Sans">3</div>
<div class="a" style="left:598px;top:150px;width:1px;height:4px;background:#000"></div>
<div class="a" style="left:605px;top:150px;width:1px;height:4px;background:#000"></div>
<div class="a" style="left:613px;top:150px;width:1px;height:4px;background:#000"></div>
<div class="a" style="left:620px;top:150px;width:1px;height:4px;background:#000"></div>
<div class="a" style="left:627px;top:148px;width:1px;height:6px;background:#000"></div>
<div class="a" style="left:634px;top:150px;width:1px;height:4px;background:#000"></div>
<div class="a" style="left:641px;top:150px;width:1px;height:4px;background:#000"></div>
<div class="a" style="left:649px;top:150px;width:1px;height:4px;background:#000"></div>
<div class="a" style="left:656px;top:150px;width:1px;height:4px;background:#000"></div>
<div class="a" style="left:663px;top:146px;width:1px;height:8px;background:#000"></div>
<div class="t" style="left:660px;top:137px;font-size:10px;color:#000;font-family:Liberation Sans">4</div>
<div class="a" style="left:670px;top:150px;width:1px;height:4px;background:#000"></div>
<div class="a" style="left:677px;top:150px;width:1px;height:4px;background:#000"></div>
<div class="a" style="left:685px;top:150px;width:1px;height:4px;background:#000"></div>
<div class="a" style="left:692px;top:150px;width:1px;height:4px;background:#000"></div>
<div class="a" style="left:699px;top:148px;width:1px;height:6px;background:#000"></div>
<div class="a" style="left:706px;top:150px;width:1px;height:4px;background:#000"></div>
<div class="a" style="left:713px;top:150px;width:1px;height:4px;background:#000"></div>
<div class="a" style="left:721px;top:150px;width:1px;height:4px;background:#000"></div>
<div class="a" style="left:728px;top:150px;width:1px;height:4px;background:#000"></div>
<div class="a" style="left:735px;top:146px;width:1px;height:8px;background:#000"></div>
<div class="t" style="left:732px;top:137px;font-size:10px;color:#000;font-family:Liberation Sans">5</div>
<div class="a" style="left:742px;top:150px;width:1px;height:4px;background:#000"></div>
<div class="a" style="left:749px;top:150px;width:1px;height:4px;background:#000"></div>
<div class="a" style="left:757px;top:150px;width:1px;height:4px;background:#000"></div>
<div class="a" style="left:764px;top:150px;width:1px;height:4px;background:#000"></div>
<div class="a" style="left:771px;top:148px;width:1px;height:6px;background:#000"></div>
<div class="a" style="left:778px;top:150px;width:1px;height:4px;background:#000"></div>
<div class="a" style="left:785px;top:150px;width:1px;height:4px;background:#000"></div>
<div class="a" style="left:793px;top:150px;width:1px;height:4px;background:#000"></div>
<div class="a" style="left:800px;top:150px;width:1px;height:4px;background:#000"></div>
<div class="a" style="left:807px;top:146px;width:1px;height:8px;background:#000"></div>
<div class="t" style="left:804px;top:137px;font-size:10px;color:#000;font-family:Liberation Sans">6</div>
<div class="a" style="left:814px;top:150px;width:1px;height:4px;background:#000"></div>
<div class="a" style="left:821px;top:150px;width:1px;height:4px;background:#000"></div>
<div class="a" style="left:829px;top:150px;width:1px;height:4px;background:#000"></div>
<div class="a" style="left:836px;top:150px;width:1px;height:4px;background:#000"></div>
<div class="a" style="left:843px;top:148px;width:1px;height:6px;background:#000"></div>
<div class="a" style="left:850px;top:150px;width:1px;height:4px;background:#000"></div>
<div class="a" style="left:857px;top:150px;width:1px;height:4px;background:#000"></div>
<div class="a" style="left:865px;top:150px;width:1px;height:4px;background:#000"></div>
<div class="a" style="left:872px;top:150px;width:1px;height:4px;background:#000"></div>
<div class="a" style="left:879px;top:146px;width:1px;height:8px;background:#000"></div>
<div class="t" style="left:876px;top:137px;font-size:10px;color:#000;font-family:Liberation Sans">7</div>
<div class="a" style="left:886px;top:150px;width:1px;height:4px;background:#000"></div>
<div class="a" style="left:893px;top:150px;width:1px;height:4px;background:#000"></div>
<div class="a" style="left:901px;top:150px;width:1px;height:4px;background:#000"></div>
<div class="a" style="left:908px;top:150px;width:1px;height:4px;background:#000"></div>
<div class="a" style="left:488px;top:135px;width:1px;height:19px;background:#3f9494"></div>
<div class="a" style="left:294px;top:155px;width:1px;height:625px;background:#8eaacc"></div>
<div class="a" style="left:276px;top:155px;width:18px;height:30px;background:linear-gradient(90deg,#f4f4f4 0,#f0f0f0 1px,#b9b9b9 5px,#c2c2c2 9px,#c8c8c8 18px)"></div>
<div class="a" style="left:276px;top:185px;width:18px;height:75px;background:linear-gradient(90deg,#f6f6f6 0,#f2f2f2 1px,#d8d8d8 5.5px,#e9e9e9 9px,#f6f6f6 14px,#fafafa 18px)"></div>
<div class="a" style="left:276px;top:260px;width:18px;height:376px;background:linear-gradient(90deg,#f6f6f4 0,#f0eaea 1px,#d6bebe 5px,#e8d2d2 9px,#f8dede 14px,#ffe0e0 18px)"></div>
<div class="a" style="left:276px;top:636px;width:18px;height:15px;background:linear-gradient(90deg,#f6f6f6 0,#f2f2f2 1px,#d8d8d8 5.5px,#e9e9e9 9px,#f6f6f6 14px,#fafafa 18px)"></div>
<div class="a" style="left:276px;top:651px;width:18px;height:58px;background:linear-gradient(90deg,#f6f6f4 0,#f0eaea 1px,#d6bebe 5px,#e8d2d2 9px,#f8dede 14px,#ffe0e0 18px)"></div>
<div class="a" style="left:276px;top:709px;width:18px;height:15px;background:linear-gradient(90deg,#f6f6f6 0,#f2f2f2 1px,#d8d8d8 5.5px,#e9e9e9 9px,#f6f6f6 14px,#fafafa 18px)"></div>
<div class="a" style="left:276px;top:724px;width:18px;height:56px;background:linear-gradient(90deg,#f4f4f4 0,#f0f0f0 1px,#b9b9b9 5px,#c2c2c2 9px,#c8c8c8 18px)"></div>
<div class="a" style="left:290px;top:178px;width:4px;height:1px;background:#000"></div>
<div class="a" style="left:290px;top:171px;width:4px;height:1px;background:#000"></div>
<div class="a" style="left:290px;top:163px;width:4px;height:1px;background:#000"></div>
<div class="a" style="left:290px;top:156px;width:4px;height:1px;background:#000"></div>
<div class="a" style="left:286px;top:185px;width:8px;height:1px;background:#000"></div>
<div class="a" style="left:290px;top:192px;width:4px;height:1px;background:#000"></div>
<div class="a" style="left:290px;top:199px;width:4px;height:1px;background:#000"></div>
<div class="a" style="left:290px;top:207px;width:4px;height:1px;background:#000"></div>
<div class="a" style="left:290px;top:214px;width:4px;height:1px;background:#000"></div>
<div class="a" style="left:288px;top:221px;width:6px;height:1px;background:#000"></div>
<div class="a" style="left:290px;top:228px;width:4px;height:1px;background:#000"></div>
<div class="a" style="left:290px;top:235px;width:4px;height:1px;background:#000"></div>
<div class="a" style="left:290px;top:243px;width:4px;height:1px;background:#000"></div>
<div class="a" style="left:290px;top:250px;width:4px;height:1px;background:#000"></div>
<div class="a" style="left:287px;top:257px;width:7px;height:1px;background:#000"></div>
<div class="a" style="left:286px;top:260px;width:8px;height:1px;background:#000"></div>
<div class="a" style="left:290px;top:267px;width:4px;height:1px;background:#000"></div>
<div class="a" style="left:290px;top:274px;width:4px;height:1px;background:#000"></div>
<div class="a" style="left:290px;top:282px;width:4px;height:1px;background:#000"></div>
<div class="a" style="left:290px;top:289px;width:4px;height:1px;background:#000"></div>
<div class="a" style="left:288px;top:296px;width:6px;height:1px;background:#000"></div>
<div class="a" style="left:290px;top:303px;width:4px;height:1px;background:#000"></div>
<div class="a" style="left:290px;top:310px;width:4px;height:1px;background:#000"></div>
<div class="a" style="left:290px;top:318px;width:4px;height:1px;background:#000"></div>
<div class="a" style="left:290px;top:325px;width:4px;height:1px;background:#000"></div>
<div class="a" style="left:286px;top:332px;width:8px;height:1px;background:#000"></div>
<div class="a" style="left:290px;top:339px;width:4px;height:1px;background:#000"></div>
<div class="a" style="left:290px;top:346px;width:4px;height:1px;background:#000"></div>
<div class="a" style="left:290px;top:354px;width:4px;height:1px;background:#000"></div>
<div class="a" style="left:290px;top:361px;width:4px;height:1px;background:#000"></div>
<div class="a" style="left:288px;top:368px;width:6px;height:1px;background:#000"></div>
<div class="a" style="left:290px;top:375px;width:4px;height:1px;background:#000"></div>
<div class="a" style="left:290px;top:382px;width:4px;height:1px;background:#000"></div>
<div class="a" style="left:290px;top:390px;width:4px;height:1px;background:#000"></div>
<div class="a" style="left:290px;top:397px;width:4px;height:1px;background:#000"></div>
<div class="a" style="left:286px;top:404px;width:8px;height:1px;background:#000"></div>
<div class="a" style="left:290px;top:411px;width:4px;height:1px;background:#000"></div>
<div class="a" style="left:290px;top:418px;width:4px;height:1px;background:#000"></div>
<div class="a" style="left:290px;top:426px;width:4px;height:1px;background:#000"></div>
<div class="a" style="left:290px;top:433px;width:4px;height:1px;background:#000"></div>
<div class="a" style="left:288px;top:440px;width:6px;height:1px;background:#000"></div>
<div class="a" style="left:290px;top:447px;width:4px;height:1px;background:#000"></div>
<div class="a" style="left:290px;top:454px;width:4px;height:1px;background:#000"></div>
<div class="a" style="left:290px;top:462px;width:4px;height:1px;background:#000"></div>
<div class="a" style="left:290px;top:469px;width:4px;height:1px;background:#000"></div>
<div class="a" style="left:286px;top:476px;width:8px;height:1px;background:#000"></div>
<div class="a" style="left:290px;top:483px;width:4px;height:1px;background:#000"></div>
<div class="a" style="left:290px;top:490px;width:4px;height:1px;background:#000"></div>
<div class="a" style="left:290px;top:498px;width:4px;height:1px;background:#000"></div>
<div class="a" style="left:290px;top:505px;width:4px;height:1px;background:#000"></div>
<div class="a" style="left:288px;top:512px;width:6px;height:1px;background:#000"></div>
<div class="a" style="left:290px;top:519px;width:4px;height:1px;background:#000"></div>
<div class="a" style="left:290px;top:526px;width:4px;height:1px;background:#000"></div>
<div class="a" style="left:290px;top:534px;width:4px;height:1px;background:#000"></div>
<div class="a" style="left:290px;top:541px;width:4px;height:1px;background:#000"></div>
<div class="a" style="left:286px;top:548px;width:8px;height:1px;background:#000"></div>
<div class="a" style="left:290px;top:555px;width:4px;height:1px;background:#000"></div>
<div class="a" style="left:290px;top:562px;width:4px;height:1px;background:#000"></div>
<div class="a" style="left:290px;top:570px;width:4px;height:1px;background:#000"></div>
<div class="a" style="left:290px;top:577px;width:4px;height:1px;background:#000"></div>
<div class="a" style="left:288px;top:584px;width:6px;height:1px;background:#000"></div>
<div class="a" style="left:290px;top:591px;width:4px;height:1px;background:#000"></div>
<div class="a" style="left:290px;top:598px;width:4px;height:1px;background:#000"></div>
<div class="a" style="left:290px;top:606px;width:4px;height:1px;background:#000"></div>
<div class="a" style="left:290px;top:613px;width:4px;height:1px;background:#000"></div>
<div class="a" style="left:287px;top:620px;width:7px;height:1px;background:#000"></div>
<div class="a" style="left:290px;top:627px;width:4px;height:1px;background:#000"></div>
<div class="a" style="left:290px;top:634px;width:4px;height:1px;background:#000"></div>
<div class="a" style="left:286px;top:636px;width:8px;height:1px;background:#000"></div>
<div class="a" style="left:290px;top:643px;width:4px;height:1px;background:#000"></div>
<div class="a" style="left:286px;top:651px;width:8px;height:1px;background:#000"></div>
<div class="a" style="left:290px;top:658px;width:4px;height:1px;background:#000"></div>
<div class="a" style="left:290px;top:665px;width:4px;height:1px;background:#000"></div>
<div class="a" style="left:290px;top:673px;width:4px;height:1px;background:#000"></div>
<div class="a" style="left:290px;top:680px;width:4px;height:1px;background:#000"></div>
<div class="a" style="left:288px;top:687px;width:6px;height:1px;background:#000"></div>
<div class="a" style="left:290px;top:694px;width:4px;height:1px;background:#000"></div>
<div class="a" style="left:290px;top:701px;width:4px;height:1px;background:#000"></div>
<div class="a" style="left:286px;top:709px;width:8px;height:1px;background:#000"></div>
<div class="a" style="left:290px;top:716px;width:4px;height:1px;background:#000"></div>
<div class="a" style="left:286px;top:724px;width:8px;height:1px;background:#000"></div>
<div class="a" style="left:290px;top:731px;width:4px;height:1px;background:#000"></div>
<div class="a" style="left:290px;top:738px;width:4px;height:1px;background:#000"></div>
<div class="a" style="left:290px;top:746px;width:4px;height:1px;background:#000"></div>
<div class="a" style="left:290px;top:753px;width:4px;height:1px;background:#000"></div>
<div class="a" style="left:288px;top:760px;width:6px;height:1px;background:#000"></div>
<div class="a" style="left:290px;top:767px;width:4px;height:1px;background:#000"></div>
<div class="a" style="left:290px;top:774px;width:4px;height:1px;background:#000"></div>
<div class="t" style="left:276px;top:180px;width:12px;height:10px;font-size:10px;color:#000;transform:rotate(-90deg);text-align:center;line-height:10px">0</div>
<div class="t" style="left:276px;top:255px;width:12px;height:10px;font-size:10px;color:#000;transform:rotate(-90deg);text-align:center;line-height:10px">0</div>
<div class="t" style="left:276px;top:327px;width:12px;height:10px;font-size:10px;color:#000;transform:rotate(-90deg);text-align:center;line-height:10px">1</div>
<div class="t" style="left:276px;top:399px;width:12px;height:10px;font-size:10px;color:#000;transform:rotate(-90deg);text-align:center;line-height:10px">2</div>
<div class="t" style="left:276px;top:471px;width:12px;height:10px;font-size:10px;color:#000;transform:rotate(-90deg);text-align:center;line-height:10px">3</div>
<div class="t" style="left:276px;top:543px;width:12px;height:10px;font-size:10px;color:#000;transform:rotate(-90deg);text-align:center;line-height:10px">4</div>
<div class="t" style="left:276px;top:631px;width:12px;height:10px;font-size:10px;color:#000;transform:rotate(-90deg);text-align:center;line-height:10px">0</div>
<div class="t" style="left:276px;top:646px;width:12px;height:10px;font-size:10px;color:#000;transform:rotate(-90deg);text-align:center;line-height:10px">0</div>
<div class="t" style="left:276px;top:704px;width:12px;height:10px;font-size:10px;color:#000;transform:rotate(-90deg);text-align:center;line-height:10px">0</div>
<div class="t" style="left:276px;top:719px;width:12px;height:10px;font-size:10px;color:#000;transform:rotate(-90deg);text-align:center;line-height:10px">0</div>
<div class="a" style="left:305px;top:165px;width:565px;height:579px;background:#fff;box-shadow:0 0 8px 1px rgba(0,0,0,0.42)"></div>
<div class="a" style="left:376px;top:186px;width:474px;height:59px;background:#dedede;border-bottom:1px solid #cdcdcd"></div>
<div class="t" style="left:530px;top:211px;font-size:19.4px;color:#cfcfcf">Page Header</div>
<svg class="a" style="left:379px;top:189px;" width="32" height="32" viewBox="0 0 32 32"><rect x="0.5" y="0.5" width="31" height="30" fill="#ececec" stroke="#6e6e6e"/><defs><linearGradient id="yl" x1="0" y1="0" x2="0" y2="1"><stop offset="0" stop-color="#fdd672"/><stop offset="1" stop-color="#e2ab3c"/></linearGradient><linearGradient id="lc" x1="0" y1="0" x2="1" y2="0"><stop offset="0" stop-color="#e2e2e2"/><stop offset="1" stop-color="#c8c8c8"/></linearGradient></defs><rect x="1" y="1" width="30" height="6" fill="url(#yl)"/><rect x="2" y="4" width="5" height="1" fill="#6a5020"/><rect x="12" y="4" width="15" height="1" fill="#a88838"/><rect x="1" y="7" width="30" height="6" fill="#f2f2f2"/><rect x="1" y="7" width="9" height="6" fill="url(#lc)"/><rect x="1" y="12" width="30" height="1" fill="#c9cbc9"/><rect x="3" y="10" width="5" height="1" fill="#606060"/><rect x="12" y="10" width="15" height="1" fill="#a0a0a0"/><rect x="1" y="13" width="30" height="6" fill="#f2f2f2"/><rect x="1" y="13" width="9" height="6" fill="url(#lc)"/><rect x="1" y="18" width="30" height="1" fill="#c9cbc9"/><rect x="3" y="16" width="5" height="1" fill="#606060"/><rect x="12" y="16" width="16" height="1" fill="#a0a0a0"/><rect x="1" y="19" width="30" height="6" fill="#f2f2f2"/><rect x="1" y="19" width="9" height="6" fill="url(#lc)"/><rect x="1" y="24" width="30" height="1" fill="#c9cbc9"/><rect x="3" y="22" width="5" height="1" fill="#606060"/><rect x="12" y="22" width="12" height="1" fill="#a0a0a0"/><rect x="1" y="25" width="30" height="6" fill="#f2f2f2"/><rect x="1" y="25" width="9" height="6" fill="url(#lc)"/><rect x="1" y="30" width="30" height="1" fill="#c9cbc9"/><rect x="3" y="28" width="5" height="1" fill="#606060"/><rect x="12" y="28" width="15" height="1" fill="#a0a0a0"/><rect x="0.5" y="0.5" width="31" height="30" fill="none" stroke="#6e6e6e"/><rect x="1" y="30" width="31" height="1.5" fill="#555" opacity="0.6"/></svg>
<svg class="a" style="left:426px;top:200px;" width="46" height="36" viewBox="0 0 46 36"><path d="M5.5 8.5 L3.5 31 L42.5 3.5" fill="none" stroke="#e3260f" stroke-width="5" stroke-linecap="round" stroke-linejoin="round"/></svg>
<div class="a" style="left:570px;top:261px;width:280px;height:135px;background:#dedede;border-left:1px solid #cfcfcf"></div>
<svg class="a" style="left:574px;top:264px;" width="32" height="32" viewBox="0 0 32 32"><rect x="0.5" y="0.5" width="31" height="30" fill="#ececec" stroke="#6e6e6e"/><defs><linearGradient id="yl" x1="0" y1="0" x2="0" y2="1"><stop offset="0" stop-color="#fdd672"/><stop offset="1" stop-color="#e2ab3c"/></linearGradient><linearGradient id="lc" x1="0" y1="0" x2="1" y2="0"><stop offset="0" stop-color="#e2e2e2"/><stop offset="1" stop-color="#c8c8c8"/></linearGradient></defs><rect x="1" y="1" width="30" height="6" fill="url(#yl)"/><rect x="2" y="4" width="5" height="1" fill="#6a5020"/><rect x="12" y="4" width="15" height="1" fill="#a88838"/><rect x="1" y="7" width="30" height="6" fill="#f2f2f2"/><rect x="1" y="7" width="9" height="6" fill="url(#lc)"/><rect x="1" y="12" width="30" height="1" fill="#c9cbc9"/><rect x="3" y="10" width="5" height="1" fill="#606060"/><rect x="12" y="10" width="15" height="1" fill="#a0a0a0"/><rect x="1" y="13" width="30" height="6" fill="#f2f2f2"/><rect x="1" y="13" width="9" height="6" fill="url(#lc)"/><rect x="1" y="18" width="30" height="1" fill="#c9cbc9"/><rect x="3" y="16" width="5" height="1" fill="#606060"/><rect x="12" y="16" width="16" height="1" fill="#a0a0a0"/><rect x="1" y="19" width="30" height="6" fill="#f2f2f2"/><rect x="1" y="19" width="9" height="6" fill="url(#lc)"/><rect x="1" y="24" width="30" height="1" fill="#c9cbc9"/><rect x="3" y="22" width="5" height="1" fill="#606060"/><rect x="12" y="22" width="12" height="1" fill="#a0a0a0"/><rect x="1" y="25" width="30" height="6" fill="#f2f2f2"/><rect x="1" y="25" width="9" height="6" fill="url(#lc)"/><rect x="1" y="30" width="30" height="1" fill="#c9cbc9"/><rect x="3" y="28" width="5" height="1" fill="#606060"/><rect x="12" y="28" width="15" height="1" fill="#a0a0a0"/><rect x="0.5" y="0.5" width="31" height="30" fill="none" stroke="#6e6e6e"/><rect x="1" y="30" width="31" height="1.5" fill="#555" opacity="0.6"/></svg>
<div class="a" style="left:375px;top:396px;width:475px;height:240px;background:#c0c0c0"></div>
<svg class="a" style="left:379px;top:400px;" width="32" height="32" viewBox="0 0 32 32"><rect x="0.5" y="0.5" width="31" height="30" fill="#ececec" stroke="#6e6e6e"/><defs><linearGradient id="yl" x1="0" y1="0" x2="0" y2="1"><stop offset="0" stop-color="#fdd672"/><stop offset="1" stop-color="#e2ab3c"/></linearGradient><linearGradient id="lc" x1="0" y1="0" x2="1" y2="0"><stop offset="0" stop-color="#e2e2e2"/><stop offset="1" stop-color="#c8c8c8"/></linearGradient></defs><rect x="1" y="1" width="30" height="6" fill="url(#yl)"/><rect x="2" y="4" width="5" height="1" fill="#6a5020"/><rect x="12" y="4" width="15" height="1" fill="#a88838"/><rect x="1" y="7" width="30" height="6" fill="#f2f2f2"/><rect x="1" y="7" width="9" height="6" fill="url(#lc)"/><rect x="1" y="12" width="30" height="1" fill="#c9cbc9"/><rect x="3" y="10" width="5" height="1" fill="#606060"/><rect x="12" y="10" width="15" height="1" fill="#a0a0a0"/><rect x="1" y="13" width="30" height="6" fill="#f2f2f2"/><rect x="1" y="13" width="9" height="6" fill="url(#lc)"/><rect x="1" y="18" width="30" height="1" fill="#c9cbc9"/><rect x="3" y="16" width="5" height="1" fill="#606060"/><rect x="12" y="16" width="16" height="1" fill="#a0a0a0"/><rect x="1" y="19" width="30" height="6" fill="#f2f2f2"/><rect x="1" y="19" width="9" height="6" fill="url(#lc)"/><rect x="1" y="24" width="30" height="1" fill="#c9cbc9"/><rect x="3" y="22" width="5" height="1" fill="#606060"/><rect x="12" y="22" width="12" height="1" fill="#a0a0a0"/><rect x="1" y="25" width="30" height="6" fill="#f2f2f2"/><rect x="1" y="25" width="9" height="6" fill="url(#lc)"/><rect x="1" y="30" width="30" height="1" fill="#c9cbc9"/><rect x="3" y="28" width="5" height="1" fill="#606060"/><rect x="12" y="28" width="15" height="1" fill="#a0a0a0"/><rect x="0.5" y="0.5" width="31" height="30" fill="none" stroke="#6e6e6e"/><rect x="1" y="30" width="31" height="1.5" fill="#555" opacity="0.6"/></svg>
<div class="a" style="left:550px;top:637px;width:100px;height:5px;overflow:hidden"><div class="t" style="left:6px;top:-3px;font-size:19px;color:#e6e6e6">Detail 1</div></div>
<div class="a" style="left:375px;top:637px;width:90px;height:14px;border-right:1px solid #e2e2e2;border-bottom:1px solid #ececec"></div>
<div class="a" style="left:465px;top:637px;width:90px;height:14px;border-right:1px solid #e2e2e2;border-bottom:1px solid #ececec"></div>
<div class="a" style="left:555px;top:637px;width:90px;height:14px;background:transparent;border-left:1px solid #e4e4e4;border-right:1px solid #e4e4e4"></div>
<div class="t" style="left:375px;top:640px;font-size:9.2px;color:#000;letter-spacing:0.95px;-webkit-text-stroke:0.1px #000">$F{pvfHl}.</div>
<div class="t" style="left:465px;top:640px;font-size:9.2px;color:#000;letter-spacing:0.95px;-webkit-text-stroke:0.1px #000">$F{pvfHl}.getDatV</div>
<div class="t" style="left:555px;top:640px;font-size:9.2px;color:#000;letter-spacing:0.95px;-webkit-text-stroke:0.1px #000">$F{pvfHl}.getDatS</div>
<div class="a" style="left:645px;top:637px;width:105px;height:14px;border-right:1px solid #e4e4e4"></div>
<div class="t" style="left:681px;top:640px;font-size:9.2px;color:#000;letter-spacing:0.95px;-webkit-text-stroke:0.1px #000">$F{obnUpom}</div>
<div class="t" style="left:753px;top:640px;font-size:9.2px;color:#000;letter-spacing:0.95px;-webkit-text-stroke:0.1px #000">$F{pvf</div>
<div class="t" style="left:786px;top:640px;font-size:9.2px;color:#000;letter-spacing:0.95px;-webkit-text-stroke:0.1px #000">$F{cisloU</div>
<div class="a" style="left:832px;top:637px;width:16px;height:14px;border:1px solid #e4e4e4;background:#fafafa"></div>
<div class="t" style="left:834px;top:638px;font-size:6px;color:#777">$P</div>
<div class="t" style="left:834px;top:644px;font-size:6px;color:#777">{Bro</div>
<div class="a" style="left:375px;top:653px;width:180px;height:15px;border:1px solid #d6d6d6;border-left:none"></div>
<div class="t" style="left:376px;top:656px;font-size:9.4px;font-weight:bold;color:#000;letter-spacing:0.7px">(($F{formular}.trim().substring(1,</div>
<div class="a" style="left:645px;top:653px;width:106px;height:15px;border:1px solid #d6d6d6;border-top-color:#999"></div>
<div class="t" style="left:663px;top:656px;font-size:9.2px;color:#000;letter-spacing:0.95px;-webkit-text-stroke:0.1px #000">$V{obnosCelkem}</div>
<div class="t" style="left:481px;top:668px;font-size:19.6px;color:#e3e3e3">formular Group Footer 1</div>
<div class="a" style="left:730px;top:679px;width:120px;height:31px;background:#dedede;border:1px solid #cfcfcf;border-right:none;border-bottom:none"></div>
<div class="a" style="left:734px;top:683px;width:33px;height:26px;overflow:hidden">
<svg class="a" style="left:0;top:0" width="32" height="32" viewBox="0 0 32 32"><rect x="0.5" y="0.5" width="31" height="30" fill="#ececec" stroke="#6e6e6e"/><defs><linearGradient id="yl" x1="0" y1="0" x2="0" y2="1"><stop offset="0" stop-color="#fdd672"/><stop offset="1" stop-color="#e2ab3c"/></linearGradient><linearGradient id="lc" x1="0" y1="0" x2="1" y2="0"><stop offset="0" stop-color="#e2e2e2"/><stop offset="1" stop-color="#c8c8c8"/></linearGradient></defs><rect x="1" y="1" width="30" height="6" fill="url(#yl)"/><rect x="2" y="4" width="5" height="1" fill="#6a5020"/><rect x="12" y="4" width="15" height="1" fill="#a88838"/><rect x="1" y="7" width="30" height="6" fill="#f2f2f2"/><rect x="1" y="7" width="9" height="6" fill="url(#lc)"/><rect x="1" y="12" width="30" height="1" fill="#c9cbc9"/><rect x="3" y="10" width="5" height="1" fill="#606060"/><rect x="12" y="10" width="15" height="1" fill="#a0a0a0"/><rect x="1" y="13" width="30" height="6" fill="#f2f2f2"/><rect x="1" y="13" width="9" height="6" fill="url(#lc)"/><rect x="1" y="18" width="30" height="1" fill="#c9cbc9"/><rect x="3" y="16" width="5" height="1" fill="#606060"/><rect x="12" y="16" width="16" height="1" fill="#a0a0a0"/><rect x="1" y="19" width="30" height="6" fill="#f2f2f2"/><rect x="1" y="19" width="9" height="6" fill="url(#lc)"/><rect x="1" y="24" width="30" height="1" fill="#c9cbc9"/><rect x="3" y="22" width="5" height="1" fill="#606060"/><rect x="12" y="22" width="12" height="1" fill="#a0a0a0"/><rect x="1" y="25" width="30" height="6" fill="#f2f2f2"/><rect x="1" y="25" width="9" height="6" fill="url(#lc)"/><rect x="1" y="30" width="30" height="1" fill="#c9cbc9"/><rect x="3" y="28" width="5" height="1" fill="#606060"/><rect x="12" y="28" width="15" height="1" fill="#a0a0a0"/><rect x="0.5" y="0.5" width="31" height="30" fill="none" stroke="#6e6e6e"/><rect x="1" y="30" width="31" height="1.5" fill="#555" opacity="0.6"/></svg></div>
<div class="a" style="left:520px;top:710px;width:140px;height:20px;overflow:hidden"><div class="t" style="left:13px;top:-4px;font-size:19.5px;color:#dcdcdc">Page Footer</div></div>
<div class="a" style="left:305px;top:185px;width:565px;height:1px;background:#a9a9ff"></div>
<div class="a" style="left:305px;top:260px;width:565px;height:1px;background:#a9a9ff"></div>
<div class="a" style="left:305px;top:636px;width:565px;height:1px;background:#a9a9ff"></div>
<div class="a" style="left:305px;top:651px;width:565px;height:1px;background:#a9a9ff"></div>
<div class="a" style="left:305px;top:709px;width:565px;height:1px;background:#a9a9ff"></div>
<div class="a" style="left:305px;top:724px;width:565px;height:1px;background:#a9a9ff"></div>
<div class="a" style="left:375px;top:165px;width:1px;height:579px;background:#a9a9ff"></div>
<div class="a" style="left:850px;top:165px;width:1px;height:579px;background:#a9a9ff"></div>
</body></html>
